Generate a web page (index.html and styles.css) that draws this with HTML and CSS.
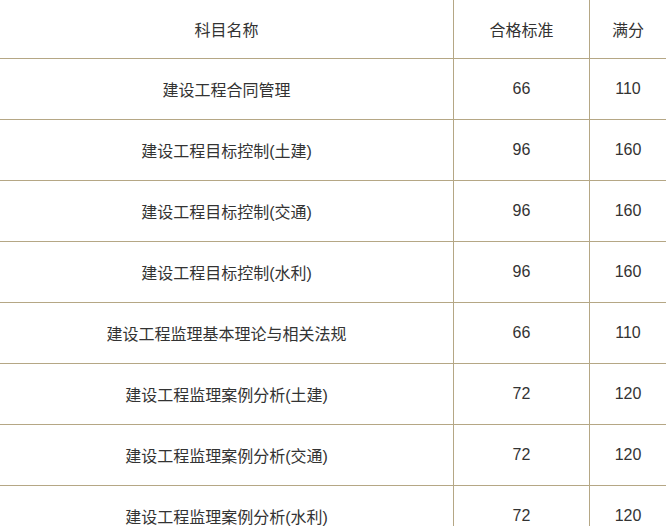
FILE: index.html
```html
<!DOCTYPE html>
<html lang="zh">
<head>
<meta charset="utf-8">
<title>合格标准</title>
<link rel="stylesheet" href="styles.css">
</head>
<body>
<table class="score-table">
  <thead>
    <tr>
      <th class="c-name">科目名称</th>
      <th class="c-pass">合格标准</th>
      <th class="c-full">满分</th>
    </tr>
  </thead>
  <tbody>
    <tr><td class="c-name">建设工程合同管理</td><td class="c-pass">66</td><td class="c-full">110</td></tr>
    <tr><td class="c-name">建设工程目标控制(土建)</td><td class="c-pass">96</td><td class="c-full">160</td></tr>
    <tr><td class="c-name">建设工程目标控制(交通)</td><td class="c-pass">96</td><td class="c-full">160</td></tr>
    <tr><td class="c-name">建设工程目标控制(水利)</td><td class="c-pass">96</td><td class="c-full">160</td></tr>
    <tr><td class="c-name">建设工程监理基本理论与相关法规</td><td class="c-pass">66</td><td class="c-full">110</td></tr>
    <tr><td class="c-name">建设工程监理案例分析(土建)</td><td class="c-pass">72</td><td class="c-full">120</td></tr>
    <tr><td class="c-name">建设工程监理案例分析(交通)</td><td class="c-pass">72</td><td class="c-full">120</td></tr>
    <tr><td class="c-name">建设工程监理案例分析(水利)</td><td class="c-pass">72</td><td class="c-full">120</td></tr>
  </tbody>
</table>
</body>
</html>
```
FILE: styles.css
```css
html, body {
  margin: 0;
  padding: 0;
  background: #ffffff;
  overflow: hidden;
}
.score-table {
  border-collapse: separate;
  border-spacing: 0;
  table-layout: fixed;
  width: 666px;
  font-family: "Liberation Sans", "Noto Sans CJK SC", sans-serif;
  font-size: 16px;
  color: #333333;
}
.score-table th,
.score-table td {
  padding: 0;
  text-align: center;
  vertical-align: middle;
  font-weight: normal;
  border-bottom: 1px solid #b5a785;
  box-sizing: border-box;
  height: 61px;
}
.score-table th {
  height: 59px;
}
.score-table .c-name {
  width: 454px;
  border-right: 1px solid #b5a785;
}
.score-table .c-pass {
  width: 136px;
  border-right: 1px solid #b5a785;
}
.score-table .c-full {
  width: 76px;
}
```
